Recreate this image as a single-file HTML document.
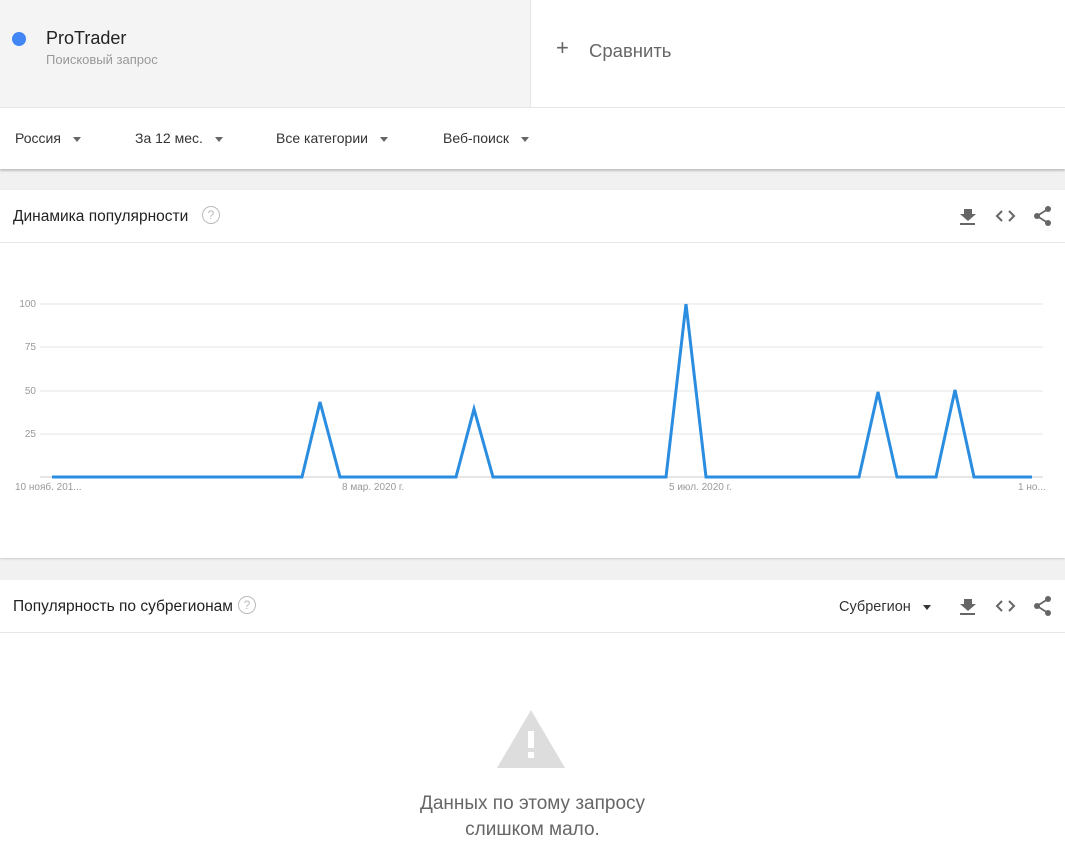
<html><head><style>
body{margin:0;width:1065px;height:846px;background:#f1f1f1;font-family:"Liberation Sans",sans-serif;position:relative;overflow:hidden}
.a{position:absolute}
.t{color:#333;font-size:14px}
.arr{display:inline-block;border-left:4px solid transparent;border-right:4px solid transparent;border-top:5px solid #666;margin-left:12px;vertical-align:middle}
</style></head><body>
<div class="a" style="left:0;top:0;width:530px;height:107px;background:#f4f4f4"></div>
<div class="a" style="left:530px;top:0;width:535px;height:107px;background:#fff;border-left:1px solid #e6e6e6"></div>
<div class="a" style="left:12px;top:32px;width:14px;height:14px;border-radius:50%;background:#4285f4"></div>
<div class="a" style="left:46px;top:28px;font-size:18px;color:#222">ProTrader</div>
<div class="a" style="left:46px;top:52px;font-size:13px;color:#999">Поисковый запрос</div>
<div class="a" style="left:556px;top:35px;font-size:22px;color:#666">+</div>
<div class="a" style="left:589px;top:40px;font-size:18.5px;color:#666">Сравнить</div>
<div class="a" style="left:0;top:107px;width:1065px;height:61px;background:#fff;border-top:1px solid #e6e6e6;box-shadow:0 2px 2px rgba(0,0,0,.2)"></div>
<div class="a t" style="top:130px;left:15px">Россия<span class="arr"></span></div>
<div class="a t" style="top:130px;left:135px">За 12 мес.<span class="arr"></span></div>
<div class="a t" style="top:130px;left:276px">Все категории<span class="arr"></span></div>
<div class="a t" style="top:130px;left:443px">Веб-поиск<span class="arr"></span></div>

<div class="a" style="left:0;top:190px;width:1065px;height:368px;background:#fff;box-shadow:0 1px 2px rgba(0,0,0,.15)"></div>
<div class="a" style="left:0;top:242px;width:1065px;height:1px;background:#e6e6e6"></div>
<div class="a" style="left:13px;top:208px;font-size:15.5px;color:#222">Динамика популярности</div>
<div class="a" style="left:202px;top:206px;width:16px;height:16px;border:1.5px solid #bbb;border-radius:50%;color:#bbb;font-size:12px;text-align:center;line-height:16px">?</div>

<div class="a" style="left:0;top:580px;width:1065px;height:266px;background:#fff"></div>
<div class="a" style="left:0;top:632px;width:1065px;height:1px;background:#e6e6e6"></div>
<div class="a" style="left:13px;top:598px;font-size:15.5px;color:#222">Популярность по субрегионам</div>
<div class="a" style="left:238px;top:596px;width:16px;height:16px;border:1.5px solid #bbb;border-radius:50%;color:#bbb;font-size:12px;text-align:center;line-height:16px">?</div>
<div class="a t" style="left:839px;top:599px;font-size:14.5px">Субрегион<span class="arr" style="border-top-color:#333"></span></div>

<svg class="a" style="left:0;top:0" width="1065" height="846">
<g fill="#666" stroke="#666">
<g id="ic"><path d="M964 209h8v5h4l-8 7-8-7h4z" stroke="none"/><rect x="960" y="223" width="15" height="2" stroke="none"/>
<path d="M1002 211l-5 5 5 5M1009 211l5 5-5 5" fill="none" stroke-width="2"/>
<circle cx="1048" cy="209" r="3" stroke="none"/><circle cx="1048" cy="223" r="3" stroke="none"/><circle cx="1037" cy="216" r="3" stroke="none"/><path d="M1048 209L1037 216 1048 223" fill="none" stroke-width="1.8"/></g>
<use href="#ic" y="390"/>
</g>
<g stroke="#e5e5e5"><line x1="40" y1="304" x2="1043" y2="304"/><line x1="40" y1="347" x2="1043" y2="347"/><line x1="40" y1="391" x2="1043" y2="391"/><line x1="40" y1="434" x2="1043" y2="434"/><line x1="40" y1="477" x2="1043" y2="477" stroke="#ccc"/></g>
<g font-size="10" fill="#999" font-family="Liberation Sans"><text x="36" y="307" text-anchor="end">100</text><text x="36" y="350" text-anchor="end">75</text><text x="36" y="394" text-anchor="end">50</text><text x="36" y="437" text-anchor="end">25</text>
<text x="15" y="490">10 нояб. 201...</text><text x="342" y="490">8 мар. 2020 г.</text><text x="669" y="490">5 июл. 2020 г.</text><text x="1018" y="490">1 но...</text></g>
<polyline fill="none" stroke="#2b8de0" stroke-width="3" stroke-linejoin="miter" points="52,477 302,477 320,402 340,477 456,477 474,409 493,477 666,477 686,304 706,477 859,477 878,392 897,477 936,477 955,390 974,477 1032,477"/>
<path d="M531 710l34 58h-68z" fill="#ddd"/><rect x="528" y="731" width="6" height="17" fill="#fff"/><rect x="528" y="752" width="6" height="6" fill="#fff"/>
</svg>
<div class="a" style="left:0;width:1065px;top:791px;text-align:center;font-size:19px;color:#666;line-height:26px">Данных по этому запросу<br>слишком мало.</div>
</body></html>
